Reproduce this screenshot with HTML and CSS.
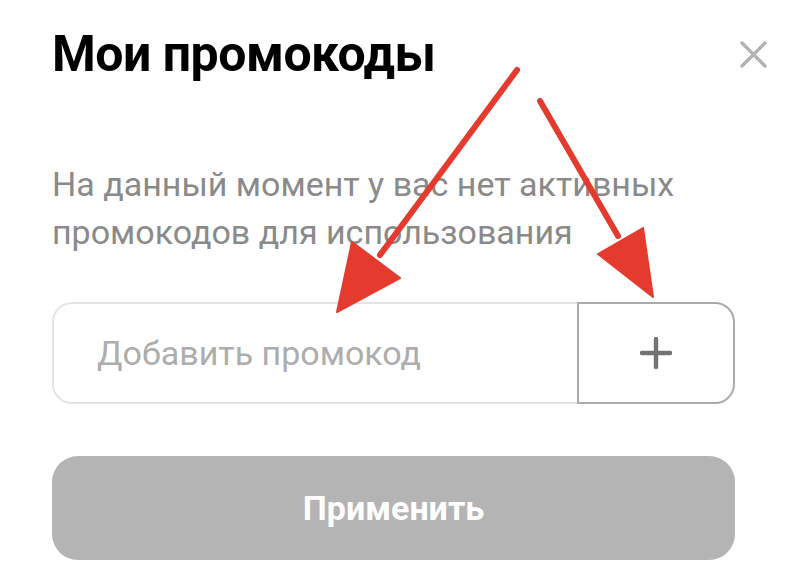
FILE: index.html
```html
<!DOCTYPE html>
<html lang="ru">
<head>
<meta charset="utf-8">
<title>Мои промокоды</title>
<link rel="stylesheet" href="styles.css">
</head>
<body>
<div class="sheet">
  <div class="header">
    <h1 class="title">Мои промокоды</h1>
    <button class="close" aria-label="Закрыть">
      <svg width="27" height="27" viewBox="0 0 27 27"><path d="M2 2 L25 25 M25 2 L2 25" stroke="#b3b3b3" stroke-width="3.4" stroke-linecap="round" fill="none"/></svg>
    </button>
  </div>
  <p class="note">На данный момент у вас нет активных промокодов для использования</p>
  <div class="promo">
    <div class="field">Добавить промокод</div>
    <button class="add" aria-label="Добавить">
      <svg width="32" height="32" viewBox="0 0 32 32"><path d="M16 2 V30 M2 16 H30" stroke="#737373" stroke-width="4.4" stroke-linecap="round" fill="none"/></svg>
    </button>
  </div>
  <button class="apply">Применить</button>
</div>
<svg class="arrows" width="800" height="586" viewBox="0 0 800 586">
  <g fill="#e53b2e" stroke="#e53b2e" stroke-linecap="round" stroke-linejoin="round">
    <line x1="517" y1="70" x2="380" y2="255" stroke-width="6"/>
    <polygon points="337,312 352,242 400,278" stroke-width="2"/>
    <line x1="540" y1="101" x2="618" y2="236" stroke-width="6"/>
    <polygon points="653,297 598,254 643,228" stroke-width="2"/>
  </g>
</svg>
</body>
</html>
```
FILE: styles.css
```css
html, body {
  margin: 0;
  padding: 0;
  background: #ffffff;
}
body {
  width: 800px;
  height: 586px;
  overflow: hidden;
  position: relative;
  font-family: Roboto, "Liberation Sans", sans-serif;
}
.sheet {
  padding: 24px 65px 0 52px;
}
.header {
  display: flex;
  justify-content: space-between;
  align-items: center;
  margin-right: -32px;
  height: 60px;
}
.title {
  margin: 0;
  font-size: 50px;
  line-height: 60px;
  font-weight: 700;
  color: #000;
  letter-spacing: -0.5px;
}
.close {
  border: 0;
  background: none;
  padding: 0;
  width: 27px;
  height: 27px;
  display: flex;
}
.note {
  margin: 76px 0 0 0;
  font-size: 34px;
  line-height: 48px;
  color: #8a8a8a;
  font-weight: 400;
}
.promo {
  display: flex;
  height: 102px;
  margin-top: 46px;
}
.field {
  flex: 1;
  display: flex;
  align-items: center;
  padding-left: 43px;
  border: 2px solid #e4e4e4;
  border-right: 0;
  border-radius: 20px 0 0 20px;
  font-size: 34px;
  color: #adadad;
}
.add {
  width: 158px;
  border: 2px solid #ababab;
  border-radius: 0 20px 20px 0;
  background: #fff;
  display: flex;
  align-items: center;
  justify-content: center;
  padding: 0;
}
.apply {
  display: block;
  width: 100%;
  height: 104px;
  margin-top: 52px;
  border: 0;
  border-radius: 26px;
  background: #b4b4b4;
  color: #fff;
  font-family: Roboto, "Liberation Sans", sans-serif;
  font-size: 34px;
  font-weight: 700;
  padding: 0;
}
.arrows {
  position: absolute;
  left: 0;
  top: 0;
  pointer-events: none;
}
```
